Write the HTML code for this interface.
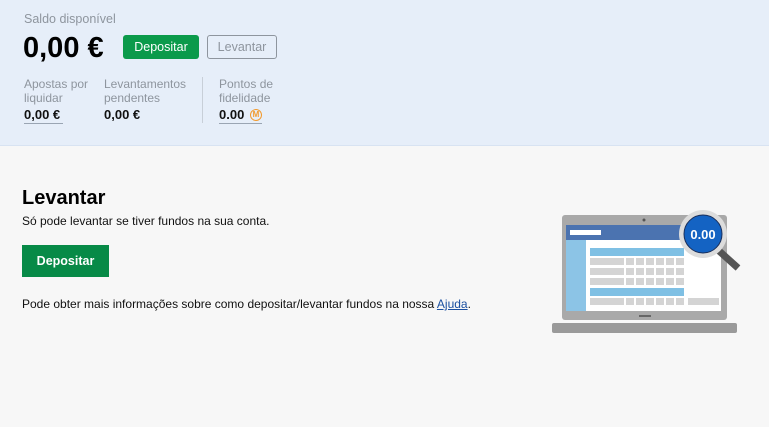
<!DOCTYPE html>
<html><head><meta charset="utf-8"><style>
*{margin:0;padding:0;box-sizing:border-box}
body{width:769px;height:427px;overflow:hidden;background:#f7f7f7;font-family:"Liberation Sans",Arial,sans-serif;position:relative}
.top{position:absolute;left:0;top:0;width:769px;height:146px;background:#e6eef9;border-bottom:1px solid #d8e3f2}
.a{position:absolute;white-space:nowrap}
.lbl{color:#8e959e;font-size:12px;line-height:14px}
.val{font-weight:bold;font-size:13px;color:#111;line-height:15px}
.ul{position:absolute;height:1px;background:#9aa5b3}
</style></head><body>
<div class="top">
<div class="a lbl" style="left:24px;top:12px;font-size:12.5px">Saldo disponível</div>
<div class="a" style="left:23px;top:31px;font-size:29px;font-weight:bold;color:#000;line-height:34px">0,00 €</div>
<div class="a" style="left:123px;top:35px;width:76px;height:24px;background:#0b9a4b;border-radius:3px;color:#fff;font-size:12.5px;line-height:24px;text-align:center">Depositar</div>
<div class="a" style="left:207px;top:35px;width:70px;height:24px;border:1px solid #8e959e;border-radius:3px;color:#8e959e;font-size:12.5px;line-height:22px;text-align:center">Levantar</div>
<div class="a lbl" style="left:24px;top:77px">Apostas por<br>liquidar</div>
<div class="a val" style="left:24px;top:107px">0,00 €</div>
<div class="ul" style="left:24px;top:123px;width:39px"></div>
<div class="a lbl" style="left:104px;top:77px">Levantamentos<br>pendentes</div>
<div class="a val" style="left:104px;top:107px">0,00 €</div>
<div class="a" style="left:202px;top:77px;width:1px;height:46px;background:#c8cfd8"></div>
<div class="a lbl" style="left:219px;top:77px">Pontos de<br>fidelidade</div>
<div class="a val" style="left:219px;top:107px">0.00</div>
<div class="a" style="left:250px;top:109px;width:12px;height:12px;border-radius:50%;border:1.5px solid #f29a2e;color:#f29a2e;font-size:8px;font-weight:bold;line-height:9px;text-align:center">M</div>
<div class="ul" style="left:219px;top:123px;width:43px"></div>
</div>
<div class="a" style="left:22px;top:187px;font-size:20px;font-weight:bold;color:#000">Levantar</div>
<div class="a" style="left:22px;top:214px;font-size:12px;color:#111">Só pode levantar se tiver fundos na sua conta.</div>
<div class="a" style="left:22px;top:245px;width:87px;height:32px;background:#078a47;color:#fff;font-weight:bold;font-size:12.5px;line-height:32px;text-align:center">Depositar</div>
<div class="a" style="left:22px;top:297px;font-size:12px;color:#111">Pode obter mais informações sobre como depositar/levantar fundos na nossa <span style="color:#1a4fa0;text-decoration:underline">Ajuda</span>.</div>
<svg class="a" style="left:540px;top:200px" width="220" height="140" viewBox="540 200 220 140">
<rect x="562" y="215" width="165" height="105" rx="3" fill="#a9a9a9"/>
<circle cx="644" cy="220" r="1.5" fill="#555"/>
<rect x="566" y="225" width="155" height="86" fill="#fff"/>
<rect x="566" y="225" width="155" height="15" fill="#4b73b0"/>
<rect x="570" y="230" width="31" height="5" fill="#fff"/>
<rect x="566" y="240" width="20" height="71" fill="#8cc4e6"/>
<rect x="590" y="248" width="94" height="8" fill="#7fc0e4"/>
<g fill="#d4d4d4">
<rect x="590" y="258" width="34" height="7"/><rect x="626" y="258" width="8" height="7"/><rect x="636" y="258" width="8" height="7"/><rect x="646" y="258" width="8" height="7"/><rect x="656" y="258" width="8" height="7"/><rect x="666" y="258" width="8" height="7"/><rect x="676" y="258" width="8" height="7"/>
<rect x="590" y="268" width="34" height="7"/><rect x="626" y="268" width="8" height="7"/><rect x="636" y="268" width="8" height="7"/><rect x="646" y="268" width="8" height="7"/><rect x="656" y="268" width="8" height="7"/><rect x="666" y="268" width="8" height="7"/><rect x="676" y="268" width="8" height="7"/>
<rect x="590" y="278" width="34" height="7"/><rect x="626" y="278" width="8" height="7"/><rect x="636" y="278" width="8" height="7"/><rect x="646" y="278" width="8" height="7"/><rect x="656" y="278" width="8" height="7"/><rect x="666" y="278" width="8" height="7"/><rect x="676" y="278" width="8" height="7"/>
<rect x="590" y="298" width="34" height="7"/><rect x="626" y="298" width="8" height="7"/><rect x="636" y="298" width="8" height="7"/><rect x="646" y="298" width="8" height="7"/><rect x="656" y="298" width="8" height="7"/><rect x="666" y="298" width="8" height="7"/><rect x="676" y="298" width="8" height="7"/>
<rect x="688" y="298" width="31" height="7"/>
</g>
<rect x="590" y="288" width="94" height="8" fill="#7fc0e4"/>
<rect x="639" y="315" width="12" height="2" fill="#666"/>
<rect x="552" y="323" width="185" height="10" rx="2" fill="#9a9a9a"/>
<line x1="718" y1="250" x2="738" y2="268" stroke="#555" stroke-width="7"/>
<circle cx="703" cy="234" r="24" fill="#dcdcdc"/>
<circle cx="703" cy="234" r="19" fill="#1463c3" stroke="#1a2f5a" stroke-width="1"/>
<text x="703" y="239" font-family="Liberation Sans,sans-serif" font-size="13" font-weight="bold" fill="#fff" text-anchor="middle">0.00</text>
</svg>
</body></html>
